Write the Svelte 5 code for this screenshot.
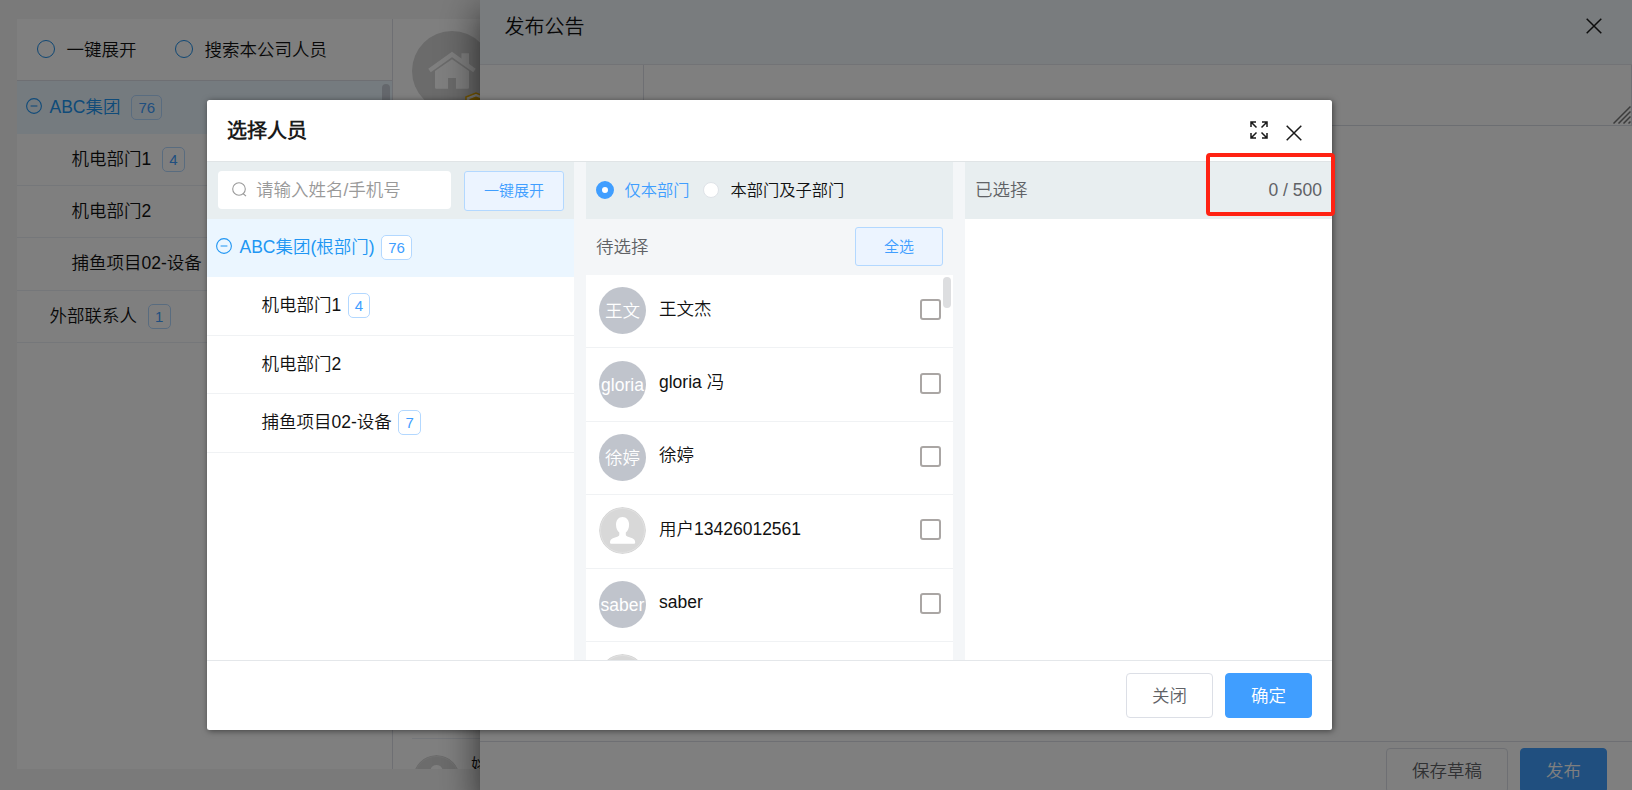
<script>
  const outerTree = [
    { name: '机电部门1', count: 4, level: 2 },
    { name: '机电部门2', level: 2 },
    { name: '捕鱼项目02-设备', level: 2 },
    { name: '外部联系人', count: 1, level: 1 }
  ];
  const innerTree = [
    { name: '机电部门1', count: 4 },
    { name: '机电部门2' },
    { name: '捕鱼项目02-设备', count: 7 }
  ];
  const people = [
    { name: '王文杰', short: '王文' },
    { name: 'gloria 冯', short: 'gloria' },
    { name: '徐婷', short: '徐婷' },
    { name: '用户13426012561' },
    { name: 'saber', short: 'saber' },
    { name: '' }
  ];
</script>

{#snippet minus()}
  <svg class="minus" viewBox="0 0 16 16" width="16" height="16">
    <circle cx="8" cy="8" r="7.4" fill="none" stroke="currentColor" stroke-width="1.1" />
    <path d="M4.6 8h6.8" stroke="currentColor" stroke-width="1.1" />
  </svg>
{/snippet}

{#snippet cross()}
  <svg viewBox="0 0 16 16" width="16" height="16">
    <path d="M.7.7l14.6 14.6M15.3.7L.7 15.3" stroke="#1a1a1a" stroke-width="1.5" fill="none" />
  </svg>
{/snippet}

{#snippet userAvatar()}
  <svg class="face" viewBox="0 0 47 47" width="47" height="47">
    <circle cx="23.5" cy="23.5" r="23.5" fill="#d8d8d8" />
    <circle cx="23.5" cy="23.5" r="22" fill="none" stroke="#e2e2e2" stroke-width=".8" />
    <path d="M23.5 10c4 0 6.6 3.300 6.600 7.700 0 3.600-1.500 6.200-3.300 7.900v2.200c0 .8.6 1.300 1.500 1.600l5 1.900c1.800.7 2.900 2.100 2.900 3.900 0 1-.6 1.500-1.500 1.500H12.500c-.9 0-1.500-.5-1.500-1.500 0-1.800 1.100-3.200 2.900-3.900l5-1.900c.9-.3 1.400-.8 1.400-1.600v-2.200c-1.800-1.700-3.300-4.300-3.300-7.900 0-4.400 2.500-7.700 6.500-7.700z" fill="#fff" />
  </svg>
{/snippet}

<div class="screen">
  <div class="page">
    <section class="org">
      <div class="org-head">
        <span class="ring"></span><span>一键展开</span>
        <span class="ring second"></span><span>搜索本公司人员</span>
      </div>
      <div class="orow active">{@render minus()}<span class="oname">ABC集团</span><span class="tag">76</span><i class="othumb"></i></div>
      {#each outerTree as d}
        <div class="orow l{d.level}"><span>{d.name}</span>{#if d.count}<span class="tag">{d.count}</span>{/if}</div>
      {/each}
    </section>
    <section class="members">
      <div class="company">
        <svg viewBox="0 0 80 80" width="80" height="80">
          <circle cx="40" cy="40" r="40" fill="#d6d6d6" />
          <path d="M49.500 22.300h7.500v14l-7.500-7z" fill="#fff" />
          <path d="M17.500 39.500L40 23.500l22.500 16" fill="none" stroke="#fff" stroke-width="4.300" />
          <path d="M23 40L40 28.300 57 40v16.500q0 1.200-1.200 1.200H44V47h-8v10.700H24.200Q23 57.700 23 56.500z" fill="#fff" />
          <path d="M54 66l10-4 10 4v10H54z" fill="#fff" stroke="#f5b400" stroke-width="1.500" />
          <path d="M57.500 68l6.500-2.500 6.500 2.500v8h-13z" fill="#f5b400" />
        </svg>
      </div>
      <div class="member">{@render userAvatar()}<span>姚</span></div>
    </section>
  </div>

  <div class="drawer">
    <header><span>发布公告</span>{@render cross()}</header>
    <div class="field">
      <div class="flabel"></div>
      <div class="farea">
        <svg viewBox="0 0 18 18" width="18" height="18"><path d="M.5 17.500l17-17M5.500 17.500l12-12M10.500 17.500l7-7M15.500 17.500l2-2" stroke="#777" stroke-width="1.500" /></svg>
      </div>
    </div>
    <div class="space"></div>
    <footer><button class="btn draft">保存草稿</button><button class="btn primary">发布</button></footer>
  </div>

  <div class="mask"></div>

  <div class="dialog">
    <header>
      <h2>选择人员</h2>
      <svg class="expand" viewBox="0 0 18 18" width="18" height="18" fill="none" stroke="#1a1a1a" stroke-width="1.500">
        <path d="M1 6V1h5M1 1l5.500 5.500M12 1h5v5M17 1l-5.500 5.500M1 12v5h5M1 17l5.500-5.500M17 12v5h-5M17 17l-5.500-5.500" />
      </svg>
      {@render cross()}
    </header>
    <div class="columns">
      <section class="col">
        <div class="bar search-bar">
          <div class="search">
            <svg viewBox="0 0 15 15" width="15" height="15"><circle cx="7" cy="7" r="6.300" fill="none" stroke="#999" stroke-width="1.100" /><path d="M11 11.500l3 2.700" stroke="#999" stroke-width="1.100" /></svg>
            <span>请输入姓名/手机号</span>
          </div>
          <button class="plain expand-all">一键展开</button>
        </div>
        <div class="irow active">{@render minus()}<span class="iname">ABC集团(根部门)</span><span class="tag">76</span></div>
        {#each innerTree as d}
          <div class="irow"><span>{d.name}</span>{#if d.count}<span class="tag">{d.count}</span>{/if}</div>
        {/each}
      </section>
      <section class="col">
        <div class="bar radios">
          <span class="radio on"></span><span class="blue">仅本部门</span>
          <span class="radio"></span><span>本部门及子部门</span>
        </div>
        <div class="pending"><span>待选择</span><button class="plain">全选</button></div>
        <div class="list">
          {#each people as p}
            <div class="person">
              {#if p.short}<span class="face">{p.short}</span>{:else}{@render userAvatar()}{/if}
              <span class="pname">{p.name}</span>
              <span class="check"></span>
            </div>
          {/each}
          <i class="thumb"></i>
        </div>
      </section>
      <section class="col">
        <div class="bar chosen"><span>已选择</span><span>0 / 500</span></div>
      </section>
    </div>
    <footer><button class="btn">关闭</button><button class="btn primary">确定</button></footer>
  </div>
  <div class="highlight"></div>
</div>

<style>
  :global(body) { margin: 0; overflow: hidden; }
  .screen, .screen * { box-sizing: border-box; }
  .screen {
    position: relative; width: 1632px; height: 790px; overflow: hidden; background: #f5f5f5;
    font: 350 17.5px/24px "Liberation Sans", "Noto Sans CJK SC DemiLight", "Noto Sans CJK SC", sans-serif; color: #111;
    white-space: nowrap;
  }
  svg { display: block; flex: none; }
  button { font: inherit; display: flex; align-items: center; justify-content: center; padding: 0; flex: none; }

  .page { display: flex; padding: 19px 0 0 17px; height: 769px; }
  .org { width: 376px; background: #fff; border-right: 1px solid #dcdfe6; }
  .org-head { height: 62px; border-bottom: 1px solid #dcdfe6; display: flex; align-items: center; padding: 1px 0 0 20px; }
  .ring { width: 18px; height: 18px; border: 1.5px solid #1f8fe8; border-radius: 50%; margin-right: 11.500px; margin-top: -3px; }
  .ring.second { margin-left: 38.500px; }
  .orow { height: 52.2px; border-bottom: 1px solid #ebeef5; display: flex; align-items: center; position: relative; padding-bottom: 1px; }
  .orow.active { height: 53px; border: 0; background: #ebf6ff; color: #2196f3; padding-left: 8.500px; padding-bottom: 2px; }
  .l2 { padding-left: 54.500px; }
  .l1 { padding-left: 32.500px; }
  .minus { margin-right: 8px; margin-top: -2px; }
  .tag { height: 25px; min-width: 22.500px; padding: 0 6px; border: 1px solid #b3d8ff; border-radius: 5px; background: #fff; color: #409eff; font-size: 15px; line-height: 24px; text-align: center; margin-left: 11px; margin-top: 1px; }
  .orow .tag { background: transparent; }
  .othumb { position: absolute; right: 2px; top: 3px; width: 8px; height: 46px; border-radius: 4px; background: #c8cfd8; }
  .members { flex: 1; background: #fff; display: flex; flex-direction: column; overflow: hidden; padding: 12px 0 0 19px; }
  .company { height: 708px; flex: none; border-bottom: 1px solid #ebeef5; }
  .member { display: flex; padding: 16px 0 0 1px; flex: none; }
  .member span { margin-left: 11px; line-height: 20px; }

  .drawer { position: absolute; left: 480px; top: 0; width: 1152px; height: 790px; background: #fff; box-shadow: 0 10px 12px -6px rgba(0,0,0,.2), 0 20px 30px 2px rgba(0,0,0,.34), 0 8px 38px 7px rgba(0,0,0,.22); display: flex; flex-direction: column; }
  .drawer header { height: 65px; flex: none; background: #f3f9fd; border-bottom: 1px solid #e4e7ed; display: flex; justify-content: space-between; align-items: flex-start; padding: 15px 30px 0 24.500px; font-size: 20px; }
  .drawer header svg { margin-top: 3px; }
  .field { display: flex; height: 61px; flex: none; border-bottom: 1px solid #d8dce4; }
  .flabel { width: 163px; }
  .farea { flex: 1; border: solid #dcdfe6; border-width: 0 1px 0 1px; display: flex; justify-content: flex-end; align-items: flex-end; padding: 0 0 1px; }
  .space { flex: 1; }
  .drawer footer { height: 49px; flex: none; border-top: 1px solid #dcdfe6; display: flex; justify-content: flex-end; gap: 12px; padding: 6px 25px 0 0; }
  .btn { width: 87px; height: 45px; border: 1px solid #dcdfe6; border-radius: 4px; background: #fff; color: #606266; }
  .draft { width: 122px; }
  .primary { background: #409eff; border-color: #409eff; color: #fff; }

  .mask { position: absolute; inset: 0; background: rgba(0,0,0,.5); }

  .dialog { position: absolute; left: 207px; top: 100px; width: 1125px; height: 630px; background: #fff; border-radius: 2.500px; box-shadow: 1px 1px 6px rgba(0,0,0,.5); display: flex; flex-direction: column; overflow: hidden; }
  .dialog header { height: 62px; flex: none; border-bottom: 1px solid #e0e4e6; display: flex; align-items: center; padding: 0 30px 0 20px; }
  h2 { margin: 0; font-size: 20px; font-weight: 700; flex: 1; color: #1a1a1a; }
  .expand { margin-right: 18px; margin-top: -1px; }
  .dialog header svg:last-child { margin-top: 4px; }
  .columns { flex: 1; min-height: 0; display: grid; grid-template-columns: 367px 367px 367px; gap: 12px; background: #f4f6f8; }
  .col { background: #fff; display: flex; flex-direction: column; min-height: 0; }
  .bar { height: 57px; flex: none; background: #e8eef0; display: flex; align-items: center; padding: 0 10px 2px; }
  .search-bar { align-items: flex-start; justify-content: space-between; padding: 9px 10px 0 11px; }
  .search { width: 233px; height: 38px; background: #fff; border-radius: 4px; display: flex; align-items: center; gap: 9px; padding: 0 0 1px 14px; color: #999; }
  .plain { height: 39px; width: 88px; border: 1px solid #b3d8ff; border-radius: 3px; background: #ecf4ff; color: #409eff; font-size: 15px; margin-top: -1px; }
  .expand-all { width: 100px; height: 40px; margin-top: 0; }
  .irow { height: 58.500px; border-bottom: 1px solid #f0f2f4; padding: 0 0 1px 54.500px; display: flex; align-items: center; flex: none; }
  .irow.active { height: 58px; border: 0; background: #ebf6ff; color: #2196f3; padding-left: 8.500px; padding-bottom: 2px; }
  .irow .tag { margin-left: 6.500px; }
  .radios { font-size: 16.250px; }
  .radio { width: 16px; height: 16px; border-radius: 50%; background: #fff; border: 1px solid #dfe3e8; margin: 0 12px 0 13px; }
  .radio.on { width: 18px; height: 18px; border: 6.500px solid #409eff; margin: 0 10.500px 0 0; }
  .blue { color: #409eff; }
  .pending { height: 56px; flex: none; background: #f4f6f8; display: flex; align-items: center; justify-content: space-between; padding: 0 10px; color: #606266; }
  .list { flex: 1; overflow: hidden; position: relative; }
  .person { height: 73.400px; border-bottom: 1px solid #f0f2f4; display: flex; align-items: center; padding: 0 12px 1px 13px; }
  .face { width: 47px; height: 47px; border-radius: 50%; flex: none; }
  span.face { background: #c0c4cc; color: #fff; line-height: 49px; display: flex; justify-content: center; }
  .pname { flex: 1; margin-left: 13px; margin-top: -4px; }
  .check { width: 21px; height: 21px; border: 2px solid #aaa6a4; border-radius: 3px; margin-top: -2px; }
  .thumb { position: absolute; right: 2px; top: 2px; width: 8px; height: 31px; border-radius: 4px; background: #dddee0; }
  .chosen { justify-content: space-between; color: #606266; }
  .dialog footer { height: 70px; flex: none; border-top: 1px solid #e4e7ea; display: flex; justify-content: flex-end; gap: 12px; padding: 12px 20px 0 0; }
  .highlight { position: absolute; left: 1206px; top: 153px; width: 129px; height: 63px; border: 4px solid #ff2213; border-radius: 4px; }
</style>
